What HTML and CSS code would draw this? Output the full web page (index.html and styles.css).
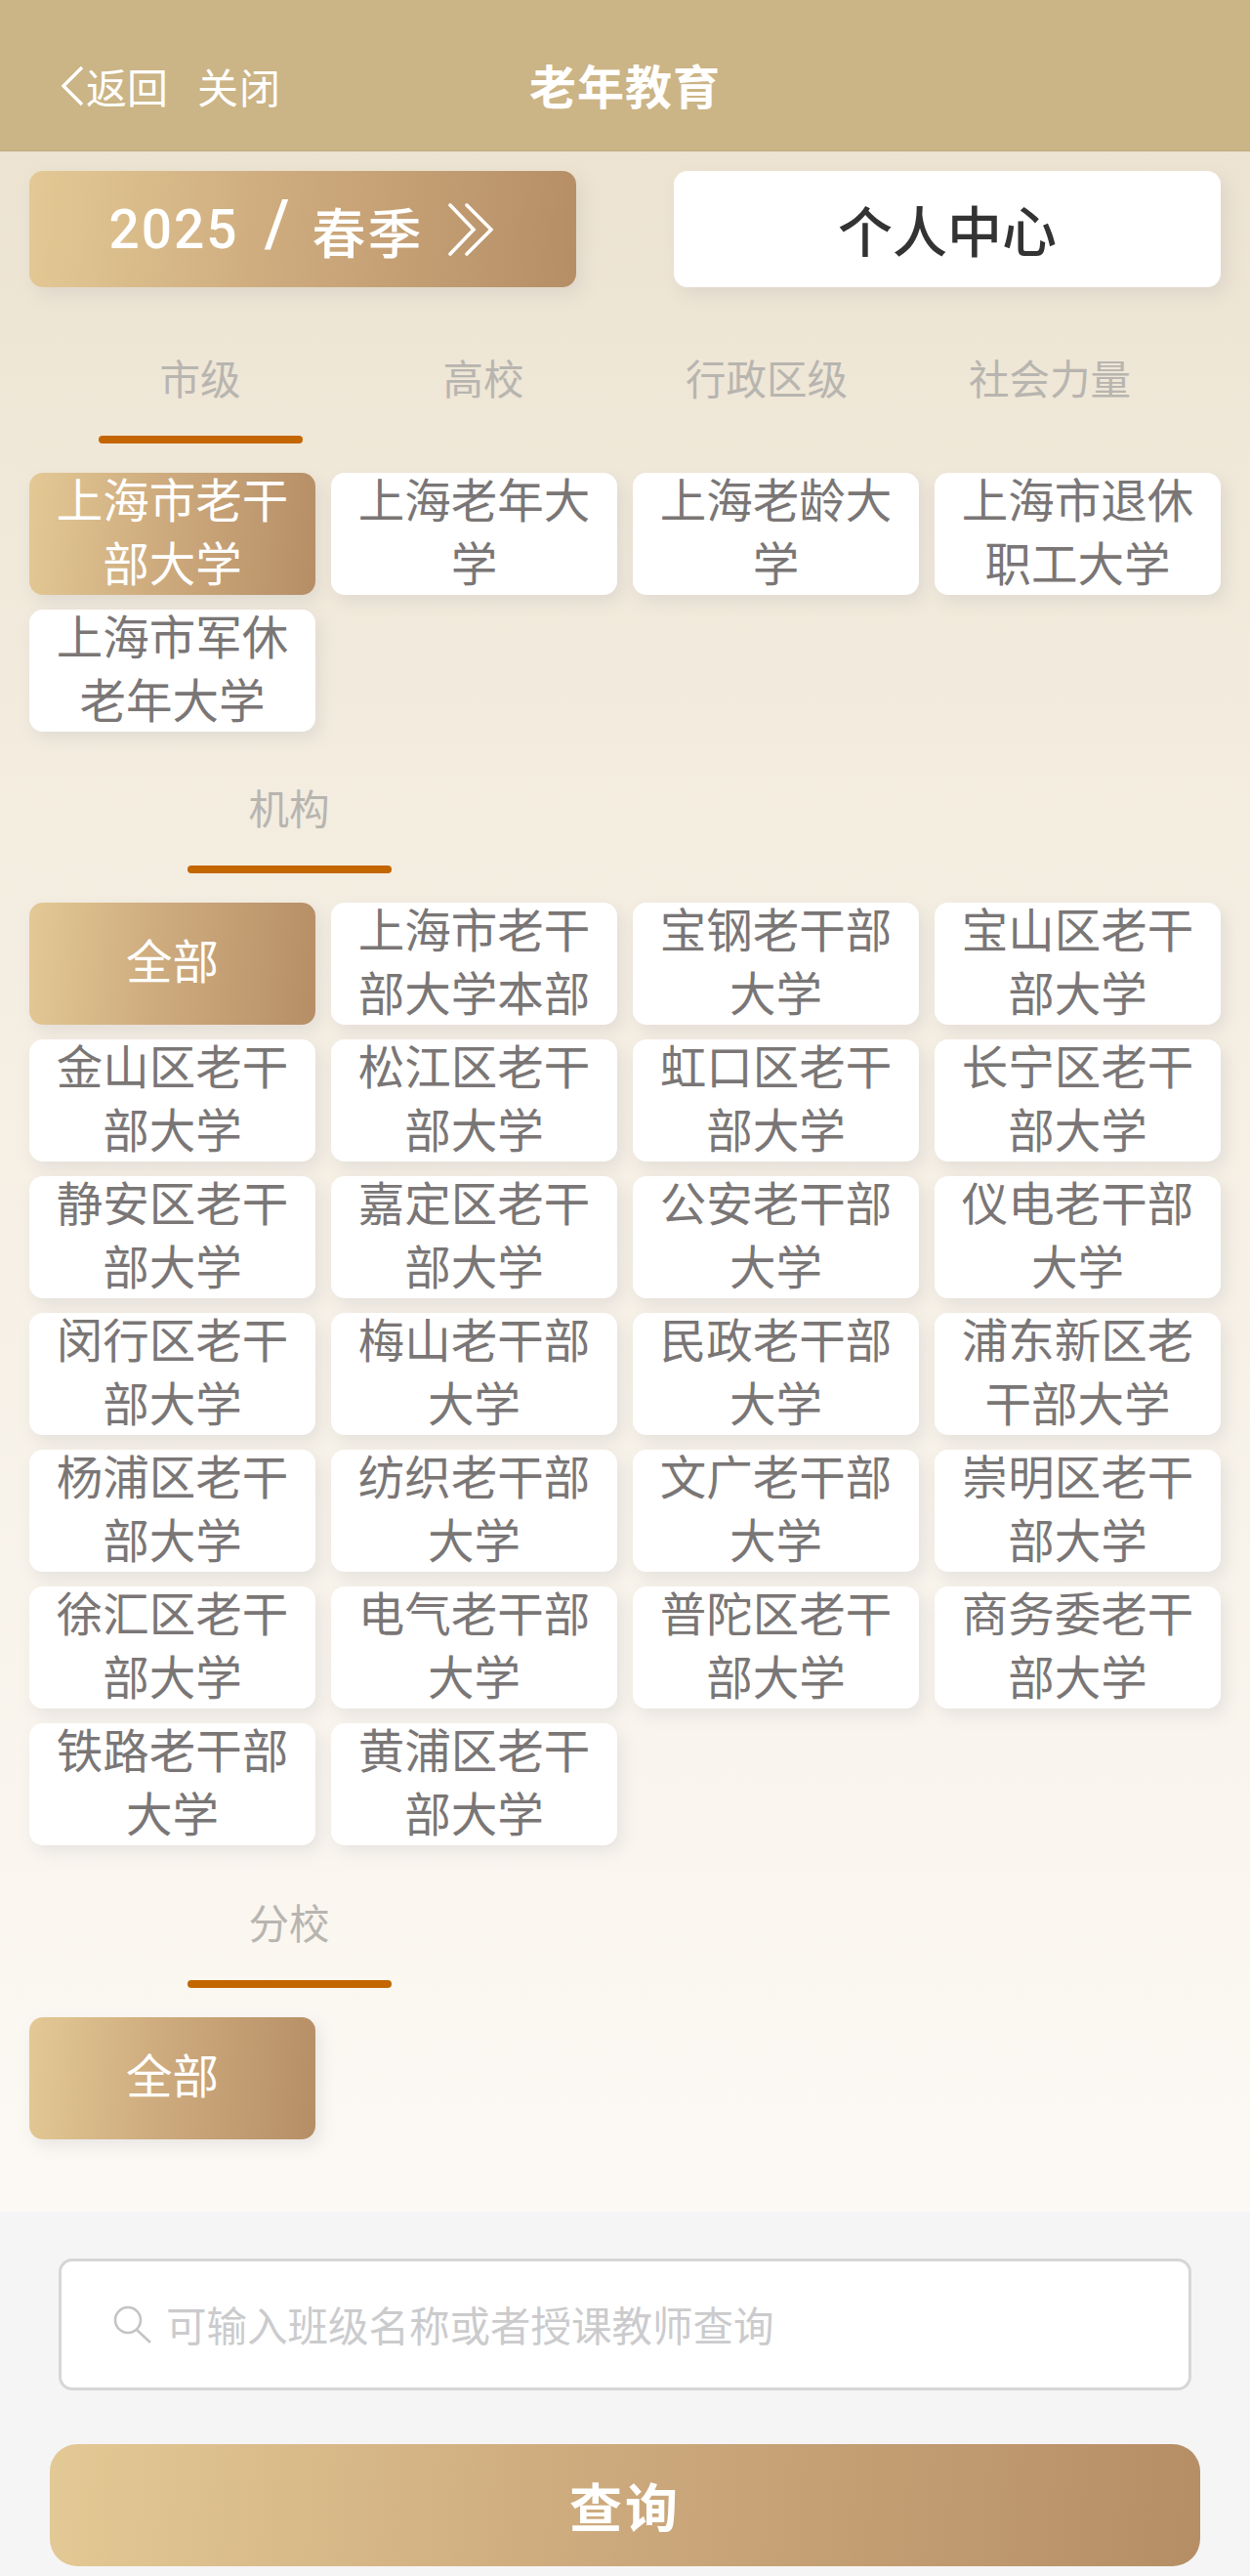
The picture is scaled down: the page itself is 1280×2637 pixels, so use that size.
FILE: index.html
```html
<!DOCTYPE html>
<html lang="zh-CN">
<head>
    <meta charset="utf-8">
    <meta name="viewport" content="width=device-width, initial-scale=1.0">
    <title>老年教育</title>
    <link rel="stylesheet" href="styles.css">
</head>
<body>

    <header class="topbar">
        <div class="topbar-left">
            <svg class="back-icon" viewBox="0 0 24 42" fill="none" stroke="#fff" stroke-width="3.4">
                <path d="M22 2 L3 21 L22 40"/>
            </svg>
            <span class="back-text">返回</span>
            <span class="close-text">关闭</span>
        </div>
        <div class="topbar-title">老年教育</div>
        <div></div>
    </header>

    <main class="content">

        <div class="action-row">
            <div class="year-btn">
                <span>2025</span><span class="year-slash">/</span><span>春季</span>
                <svg class="year-icon" viewBox="0 0 46 54" fill="none" stroke="#fff" stroke-width="3.6" stroke-linecap="round">
                    <path d="M2 2 L26 27 L2 52"/>
                    <path d="M19 2 L44 27 L19 52"/>
                </svg>
            </div>
            <div class="user-btn">个人中心</div>
        </div>

        <div class="tabs">
            <div class="tab"><span class="tab-label">市级</span><i class="tab-bar"></i></div>
            <div class="tab"><span class="tab-label">高校</span></div>
            <div class="tab"><span class="tab-label">行政区级</span></div>
            <div class="tab"><span class="tab-label">社会力量</span></div>
        </div>

        <div class="grid">
            <div class="card active">上海市老干部大学</div>
            <div class="card">上海老年大学</div>
            <div class="card">上海老龄大学</div>
            <div class="card">上海市退休职工大学</div>
            <div class="card">上海市军休老年大学</div>
        </div>

        <div class="tabs tabs-sub">
            <div class="tab"><span class="tab-label">机构</span><i class="tab-bar"></i></div>
        </div>

        <div class="grid">
            <div class="card active">全部</div>
            <div class="card">上海市老干部大学本部</div>
            <div class="card">宝钢老干部大学</div>
            <div class="card">宝山区老干部大学</div>
            <div class="card">金山区老干部大学</div>
            <div class="card">松江区老干部大学</div>
            <div class="card">虹口区老干部大学</div>
            <div class="card">长宁区老干部大学</div>
            <div class="card">静安区老干部大学</div>
            <div class="card">嘉定区老干部大学</div>
            <div class="card">公安老干部大学</div>
            <div class="card">仪电老干部大学</div>
            <div class="card">闵行区老干部大学</div>
            <div class="card">梅山老干部大学</div>
            <div class="card">民政老干部大学</div>
            <div class="card">浦东新区老干部大学</div>
            <div class="card">杨浦区老干部大学</div>
            <div class="card">纺织老干部大学</div>
            <div class="card">文广老干部大学</div>
            <div class="card">崇明区老干部大学</div>
            <div class="card">徐汇区老干部大学</div>
            <div class="card">电气老干部大学</div>
            <div class="card">普陀区老干部大学</div>
            <div class="card">商务委老干部大学</div>
            <div class="card">铁路老干部大学</div>
            <div class="card">黄浦区老干部大学</div>
        </div>

        <div class="tabs tabs-sub tabs-last">
            <div class="tab"><span class="tab-label">分校</span><i class="tab-bar"></i></div>
        </div>

        <div class="grid">
            <div class="card active">全部</div>
        </div>

    </main>

    <footer class="search-panel">
        <div class="search-box">
            <svg class="search-icon" viewBox="0 0 40 40" fill="none" stroke="#c4c4c6" stroke-width="2.6">
                <circle cx="15" cy="15" r="13"/>
                <path d="M24 25 L38 38"/>
            </svg>
            <span class="search-hint">可输入班级名称或者授课教师查询</span>
        </div>
        <div class="search-btn">查询</div>
    </footer>

</body>
</html>
```

FILE: styles.css
```css
:root {
    --gold: linear-gradient(95deg, #e3c995 0%, #d0ae80 40%, #b68e66 100%);
    --card-shadow: 5px 7px 16px rgba(130, 130, 150, 0.15);
}

* {
    box-sizing: border-box;
}

html,
body {
    margin: 0;
    height: 100%;
}

body {
    width: 1280px;
    height: 2637px;
    background-color: #f5f5f6;
    font-family: Roboto, "Noto Sans CJK SC", sans-serif;
}

/* top bar */
.topbar {
    height: 155px;
    padding: 18px 62px 0;
    display: grid;
    grid-template-columns: 1fr auto 1fr;
    align-items: center;
    background-color: #cbb485;
    border-bottom: solid 1px #bfab82;
    color: #fff;
}

.topbar-left {
    display: flex;
    align-items: center;
    margin-top: 3px;
    font-size: 42px;
}

.back-icon {
    width: 24px;
    height: 42px;
    margin-right: 2px;
}

.close-text {
    margin-left: 30px;
    letter-spacing: 1px;
}

.topbar-title {
    font-size: 48px;
    font-weight: 700;
    letter-spacing: 1px;
}

/* page body */
.content {
    height: 2109px;
    padding: 20px 30px 0;
    background: linear-gradient(180deg, #ece3d1 0%, #f3ecdf 30%, #fcf9f4 100%);
}

.action-row {
    display: flex;
    justify-content: space-between;
}

.year-btn,
.user-btn {
    width: 560px;
    height: 119px;
    border-radius: 14px;
    box-shadow: 6px 8px 18px rgba(130, 130, 150, 0.14);
    display: flex;
    align-items: center;
    justify-content: center;
}

.year-btn {
    padding-right: 3px;
    background: var(--gold);
    color: #fff;
    font-size: 55px;
    font-weight: 500;
    letter-spacing: 2px;
}

.year-slash {
    margin: -10px 21px 0 26px;
    font-size: 66px;
    line-height: 1;
}

.year-icon {
    width: 46px;
    height: 54px;
    margin-left: 26px;
}

.user-btn {
    padding-bottom: 2px;
    background-color: #fff;
    color: #333;
    font-size: 56px;
    font-weight: 500;
}

.tabs {
    margin: 30px 30px 0;
    display: flex;
}

.tabs-sub {
    margin: 15px 0 0 121px;
}

.tabs-last {
    margin-top: 16px;
}

.tab {
    width: 290px;
    height: 130px;
    padding-top: 38px;
    display: flex;
    flex-direction: column;
    align-items: center;
}

.tab-label {
    height: 56px;
    line-height: 56px;
    font-size: 41.5px;
    font-weight: 400;
    color: #b8b5b0;
}

.tab-bar {
    display: block;
    width: 209px;
    height: 8px;
    margin-top: 28px;
    border-radius: 4px;
    background-color: #c46600;
}

.grid {
    margin-top: 30px;
    display: grid;
    grid-template-columns: repeat(4, 293px);
    gap: 15px 16px;
}

.card {
    height: 125px;
    padding: 0 19px;
    border-radius: 14px;
    background-color: #fff;
    box-shadow: var(--card-shadow);
    display: flex;
    align-items: center;
    justify-content: center;
    text-align: center;
    font-size: 47.5px;
    font-weight: 400;
    line-height: 65px;
    color: #7a7676;
}

.card.active {
    background: var(--gold);
    color: #fff;
}

/* bottom search */
.search-panel {
    padding: 48px 51px 0;
}

.search-box {
    height: 135px;
    margin: 0 9px;
    padding-left: 53px;
    border: solid 3px #d6d6d8;
    border-radius: 14px;
    background-color: #fff;
    display: flex;
    align-items: center;
}

.search-icon {
    width: 40px;
    height: 40px;
    margin-right: 14px;
}

.search-hint {
    padding-bottom: 2px;
    font-size: 41.5px;
    font-weight: 400;
    color: #cbcbcd;
}

.search-btn {
    height: 125px;
    margin-top: 55px;
    border-radius: 28px;
    background: var(--gold);
    color: #fff;
    font-size: 54px;
    font-weight: 700;
    letter-spacing: 3px;
    display: flex;
    align-items: center;
    justify-content: center;
}
```
